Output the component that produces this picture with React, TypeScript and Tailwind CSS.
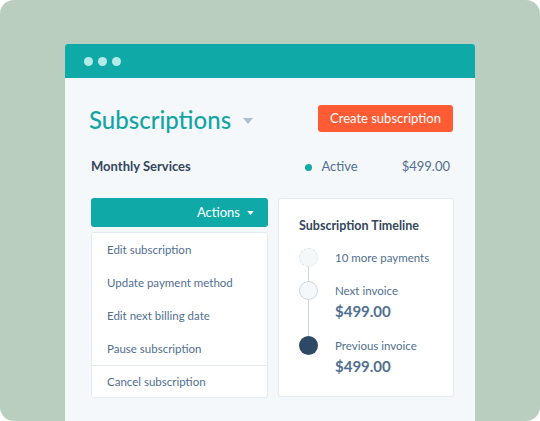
const actions = ['Edit subscription', 'Update payment method', 'Edit next billing date', 'Pause subscription'];

function Caret({ className }: { className: string }) {
  return (
    <svg viewBox="0 0 10 6" className={className} fill="currentColor">
      <path d="M0 0h10L5 6z" />
    </svg>
  );
}

export default function App() {
  return (
    <div className="w-[540px] h-[421px] bg-white" style={{ fontFamily: 'Lato, "Noto Sans", sans-serif' }}>
      <div className="w-full h-full rounded-[14px] bg-[#b9cebf] overflow-hidden flex justify-center pt-[44px]">
        <div className="w-[410px] bg-[#f5f8fb] rounded-t-[3px] flex flex-col shrink-0">
          <div className="h-[34px] bg-[#0fa9a8] rounded-t-[3px] flex items-center gap-[5px] pl-[19px]">
            <span className="w-[9px] h-[9px] rounded-full bg-[#b3ebe7]" />
            <span className="w-[9px] h-[9px] rounded-full bg-[#b3ebe7]" />
            <span className="w-[9px] h-[9px] rounded-full bg-[#b3ebe7]" />
          </div>

          <div className="pl-[25px] pr-[21px] pt-[27px]">
            <div className="flex items-center justify-between">
              <div className="flex items-center gap-[12px] mt-[2px] -ml-[1px]">
                <h1 className="text-[24px] font-medium text-[#12a5a3] leading-none">Subscriptions</h1>
                <Caret className="w-[10px] h-[6px] text-[#b0bccb] mt-[2px]" />
              </div>
              <button className="w-[135px] h-[27px] mr-[1px] rounded-[3px] bg-[#ff5c35] text-white text-[13px] leading-none">
                Create subscription
              </button>
            </div>

            <div className="flex items-center mt-[23px] h-[24px] pl-[1px]">
              <span className="text-[13px] font-bold text-[#33475b]">Monthly Services</span>
              <span className="ml-auto w-[7px] h-[7px] rounded-full bg-[#0fa9a8]" />
              <span className="ml-[9px] text-[13px] text-[#516f90]">Active</span>
              <span className="ml-[44px] mr-[4px] text-[13px] text-[#516f90]">$499.00</span>
            </div>

            <div className="flex gap-[10px] mt-[19px] pl-[1px]">
              <div className="w-[177px] shrink-0 flex flex-col">
                <button className="h-[29px] rounded-[3px] bg-[#0fa9a8] text-white text-[13px] flex items-center justify-end gap-[7px] pr-[14px]">
                  Actions
                  <Caret className="w-[7px] h-[4px] text-white" />
                </button>
                <div className="mt-[5px] bg-white border border-[#e5ebf1] rounded-[3px] flex flex-col">
                  {actions.map((a) => (
                    <div key={a} className="h-[33px] flex items-center px-[15px] text-[11.5px] text-[#516f90]">
                      {a}
                    </div>
                  ))}
                  <div className="border-t border-[#e5ebf1] h-[32px] flex items-center px-[15px] text-[11.5px] text-[#516f90]">
                    Cancel subscription
                  </div>
                </div>
              </div>

              <div className="w-[176px] shrink-0 h-[199px] bg-white border border-[#e5ebf1] rounded-[3px] px-[20px] pt-[18px]">
                <div className="text-[12.5px] font-bold text-[#33475b]">Subscription Timeline</div>
                <div className="relative mt-[12px]">
                  <div className="absolute left-[9px] top-[10px] h-[78px] w-px bg-[#cbd6e2]" />
                  <div className="relative flex gap-[17px] items-start">
                    <span className="w-[19px] h-[19px] rounded-full bg-[#f5f8fb] border border-dashed border-[#dfe3eb] shrink-0" />
                    <span className="text-[11.5px] text-[#516f90] leading-[19px]">10 more payments</span>
                  </div>
                  <div className="relative flex gap-[17px] items-start mt-[14px]">
                    <span className="w-[19px] h-[19px] rounded-full bg-[#f5f8fb] border border-[#cbd6e2] shrink-0" />
                    <div className="flex flex-col">
                      <span className="text-[11.5px] text-[#516f90] leading-[19px]">Next invoice</span>
                      <span className="text-[15px] font-bold text-[#516f90] leading-[22px]">$499.00</span>
                    </div>
                  </div>
                  <div className="relative flex gap-[17px] items-start mt-[14px]">
                    <span className="w-[19px] h-[19px] rounded-full bg-[#2d4964] shrink-0" />
                    <div className="flex flex-col">
                      <span className="text-[11.5px] text-[#516f90] leading-[19px]">Previous invoice</span>
                      <span className="text-[15px] font-bold text-[#516f90] leading-[22px]">$499.00</span>
                    </div>
                  </div>
                </div>
              </div>
            </div>
          </div>
        </div>
      </div>
    </div>
  );
}
